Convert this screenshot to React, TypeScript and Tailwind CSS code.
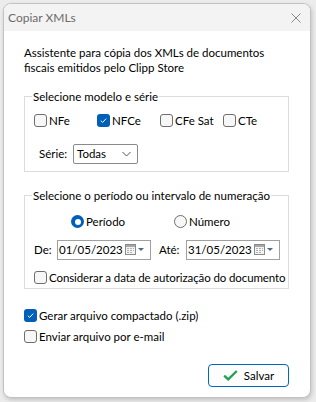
import React from "react";

const font = { fontFamily: 'Lato, "Noto Sans", sans-serif' };

function Check({ checked }: { checked?: boolean }) {
  return checked ? (
    <span className="w-[13px] h-[13px] rounded-[3px] bg-[#005fb8] flex items-center justify-center shrink-0">
      <svg width="9" height="9" viewBox="0 0 9 9">
        <path d="M1.8 4.7 L3.6 6.4 L7.2 2.6" fill="none" stroke="#fff" strokeWidth="1" />
      </svg>
    </span>
  ) : (
    <span className="w-[13px] h-[13px] rounded-[3px] border border-[#6e6e6e] bg-[#f7f7f7] shrink-0" />
  );
}

function Radio({ checked }: { checked?: boolean }) {
  return checked ? (
    <span className="w-[13px] h-[13px] rounded-full bg-[#005fb8] flex items-center justify-center shrink-0">
      <span className="w-[6px] h-[6px] rounded-full bg-white" />
    </span>
  ) : (
    <span className="w-[13px] h-[13px] rounded-full border border-[#6e6e6e] bg-[#f7f7f7] shrink-0" />
  );
}

function CalIcon() {
  return (
    <svg width="22" height="12" viewBox="0 0 22 12" className="shrink-0">
      <rect x="0.5" y="0.5" width="10" height="10" fill="#f4f4f4" stroke="#8a8a8a" />
      <rect x="1" y="1" width="9" height="2" fill="#a8a8a8" />
      <g fill="#b0b0b0">
        <rect x="2" y="4" width="2" height="1" />
        <rect x="5" y="4" width="2" height="1" />
        <rect x="8" y="4" width="1" height="1" />
        <rect x="2" y="6" width="2" height="1" />
        <rect x="5" y="6" width="2" height="1" />
        <rect x="8" y="6" width="1" height="1" />
        <rect x="2" y="8" width="2" height="1" />
        <rect x="5" y="8" width="2" height="1" />
      </g>
      <path d="M13 4 L19 4 L16 7 Z" fill="#4a6a9a" />
    </svg>
  );
}

function DateBox({ value }: { value: string }) {
  return (
    <div className="w-[94px] h-[20px] border border-[#a0a0a0] bg-white flex items-center pl-[1px] pr-[3px] justify-between">
      <span className="text-[11.5px] leading-[14px] text-black">{value}</span>
      <CalIcon />
    </div>
  );
}

export default function App() {
  return (
    <div className="w-[316px] h-[402px] bg-[#ececec] pt-[3px] pl-[3px]" style={font}>
      <div className="w-[308px] h-[395px] rounded-[8px] border border-[#c2c2c2] bg-white overflow-hidden shadow-[1px_2px_4px_rgba(0,0,0,0.18)] flex flex-col">
        <div className="h-[27px] bg-[#f3f3f3] flex items-center justify-between pl-[4px] pr-[9px] shrink-0">
          <span className="text-[12px] text-[#6b6b6b]">Copiar XMLs</span>
          <svg width="10" height="10" viewBox="0 0 10 10">
            <path d="M0.5 0.5 L9.5 9.5 M9.5 0.5 L0.5 9.5" stroke="#8a8a8a" strokeWidth="1" fill="none" />
          </svg>
        </div>
        <div className="flex-1 pl-[20px] pr-[21px] pt-[14px] text-black text-[11.5px]">
          <div className="leading-[15px]">
            <div>Assistente para cópia dos XMLs de documentos</div>
            <div>fiscais emitidos pelo Clipp Store</div>
          </div>

          <fieldset className="mt-[14px] border border-[#dcdcdc] pl-[9px] pb-[7px]">
            <legend className="leading-[15px] ml-[-2px] px-[1px]">Selecione modelo e série</legend>
            <div className="flex mt-[9px] h-[15px] items-center">
              <label className="w-[63px] flex items-center gap-[2px]"><Check /><span>NFe</span></label>
              <label className="w-[63px] flex items-center gap-[2px]"><Check checked /><span>NFCe</span></label>
              <label className="w-[63px] flex items-center gap-[2px]"><Check /><span>CFe Sat</span></label>
              <label className="w-[63px] flex items-center gap-[2px]"><Check /><span>CTe</span></label>
            </div>
            <div className="flex items-center mt-[16px] pl-[5px]">
              <span className="w-[34px]">Série:</span>
              <div className="w-[65px] h-[20px] border border-[#8a8a8a] rounded-[2px] bg-white flex items-center justify-between pl-[3px] pr-[6px]">
                <span>Todas</span>
                <svg width="9" height="6" viewBox="0 0 9 6">
                  <path d="M0.5 1 L4.5 5 L8.5 1" stroke="#555" strokeWidth="1" fill="none" />
                </svg>
              </div>
            </div>
          </fieldset>

          <fieldset className="mt-[16px] border border-[#dcdcdc] pl-[9px] pb-[5px] h-[101px]">
            <legend className="leading-[15px] ml-[-2px] px-[1px]">Selecione o período ou intervalo de numeração</legend>
            <div className="flex items-center mt-[11px] h-[15px]">
              <label className="ml-[37px] w-[103px] flex items-center gap-[2px]"><Radio checked /><span>Período</span></label>
              <label className="flex items-center gap-[2px]"><Radio /><span>Número</span></label>
            </div>
            <div className="flex items-center mt-[11px]">
              <span className="w-[23px]">De:</span>
              <DateBox value="01/05/2023" />
              <span className="ml-[8px] w-[27px]">Até:</span>
              <DateBox value="31/05/2023" />
            </div>
            <label className="flex items-center gap-[2px] mt-[10px] h-[15px] whitespace-nowrap">
              <Check /><span className="tracking-[-0.1px]">Considerar a data de autorização do documento</span>
            </label>
          </fieldset>

          <label className="flex items-center gap-[2px] mt-[19px] h-[15px]">
            <Check checked /><span>Gerar arquivo compactado (.zip)</span>
          </label>
          <label className="flex items-center gap-[2px] mt-[6px] h-[15px]">
            <Check /><span>Enviar arquivo por e-mail</span>
          </label>

          <div className="flex justify-end mt-[20px]">
            <button className="w-[81px] h-[23px] rounded-[4px] border border-[#0067c0] bg-[#fdfdfd] flex items-center justify-center gap-[6px]">
              <svg width="15" height="11" viewBox="0 0 15 11">
                <path d="M1.2 5.6 L5.2 9.4 L13.8 1" stroke="#1aa34a" strokeWidth="2.2" fill="none" />
              </svg>
              <span>Salvar</span>
            </button>
          </div>
        </div>
      </div>
    </div>
  );
}
